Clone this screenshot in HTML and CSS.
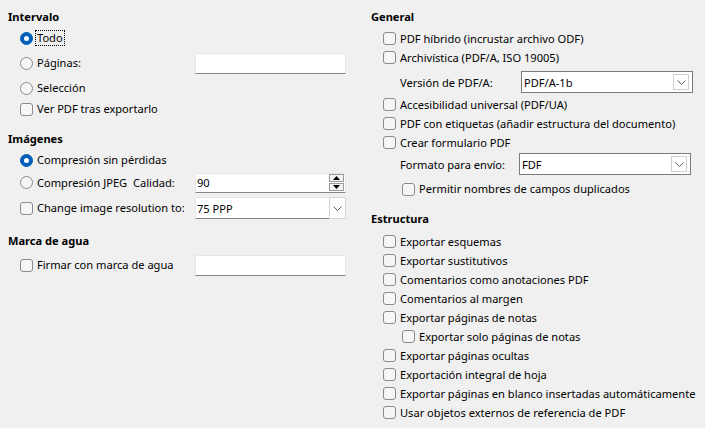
FILE: index.html
```html
<!DOCTYPE html>
<html lang="es">
<head>
<meta charset="utf-8">
<title>Exportar a PDF - General</title>
<link rel="stylesheet" href="styles.css">
</head>
<body>
<div class="dialog">
  <div class="col">
    <div class="heading">Intervalo</div>
    <div class="row h24"><div class="lead"><span class="radio on"></span><span class="label focus">Todo</span></div></div>
    <div class="row h26"><div class="lead"><span class="radio"></span><span class="label">Páginas:</span></div><span class="field"></span></div>
    <div class="row h24"><div class="lead"><span class="radio"></span><span class="label">Selección</span></div></div>
    <div class="row h18"><div class="lead"><span class="check"></span><span class="label">Ver PDF tras exportarlo</span></div></div>

    <div class="heading mt12">Imágenes</div>
    <div class="row h24"><div class="lead"><span class="radio on"></span><span class="label">Compresión sin pérdidas</span></div></div>
    <div class="row h21"><div class="lead"><span class="radio"></span><span class="label">Compresión JPEG&nbsp; Calidad:</span></div>
      <span class="field spin"><span class="val">90</span>
        <span class="spinbtns">
          <span class="sbtn"><svg width="7" height="4" viewBox="0 0 7 4"><path d="M0 4 L3.5 0 L7 4 Z" fill="#000"/></svg></span>
          <span class="sbtn"><svg width="7" height="4" viewBox="0 0 7 4"><path d="M0 0 L3.5 4 L7 0 Z" fill="#000"/></svg></span>
        </span>
      </span>
    </div>
    <div class="row h30"><div class="lead"><span class="check"></span><span class="label">Change image resolution to:</span></div>
      <span class="field combo"><span class="val">75 PPP</span>
        <span class="dropbtn"><svg width="9" height="5" viewBox="0 0 9 5"><path d="M0.5 0.5 L4.5 4.5 L8.5 0.5" fill="none" stroke="#606060" stroke-width="1"/></svg></span>
      </span>
    </div>

    <div class="heading mt9">Marca de agua</div>
    <div class="row h30"><div class="lead"><span class="check"></span><span class="label">Firmar con marca de agua</span></div><span class="field"></span></div>
  </div>

  <div class="col">
    <div class="heading">General</div>
    <div class="row h19 mt3"><span class="check"></span><span class="label">PDF híbrido (incrustar archivo ODF)</span></div>
    <div class="row h19"><span class="check"></span><span class="label">Archivística (PDF/A, ISO 19005)</span></div>
    <div class="row h28 sub pt2">
      <span class="sublabel w121">Versión de PDF/A:</span>
      <span class="select"><span class="val">PDF/A-1b</span>
        <span class="selbtn"><svg width="9" height="5" viewBox="0 0 9 5"><path d="M0.5 0.5 L4.5 4.5 L8.5 0.5" fill="none" stroke="#606060" stroke-width="1"/></svg></span>
      </span>
    </div>
    <div class="row h19"><span class="check"></span><span class="label">Accesibilidad universal (PDF/UA)</span></div>
    <div class="row h19"><span class="check"></span><span class="label">PDF con etiquetas (añadir estructura del documento)</span></div>
    <div class="row h19"><span class="check"></span><span class="label">Crear formulario PDF</span></div>
    <div class="row h24 sub">
      <span class="sublabel w119">Formato para envío:</span>
      <span class="select"><span class="val">FDF</span>
        <span class="selbtn"><svg width="9" height="5" viewBox="0 0 9 5"><path d="M0.5 0.5 L4.5 4.5 L8.5 0.5" fill="none" stroke="#606060" stroke-width="1"/></svg></span>
      </span>
    </div>
    <div class="row h26 nested"><span class="check"></span><span class="label">Permitir nombres de campos duplicados</span></div>

    <div class="heading mt8">Estructura</div>
    <div class="row h19 mt4"><span class="check"></span><span class="label">Exportar esquemas</span></div>
    <div class="row h19"><span class="check"></span><span class="label">Exportar sustitutivos</span></div>
    <div class="row h19"><span class="check"></span><span class="label">Comentarios como anotaciones PDF</span></div>
    <div class="row h19"><span class="check"></span><span class="label">Comentarios al margen</span></div>
    <div class="row h19"><span class="check"></span><span class="label">Exportar páginas de notas</span></div>
    <div class="row h19 nested"><span class="check"></span><span class="label">Exportar solo páginas de notas</span></div>
    <div class="row h19"><span class="check"></span><span class="label">Exportar páginas ocultas</span></div>
    <div class="row h19"><span class="check"></span><span class="label">Exportación integral de hoja</span></div>
    <div class="row h19"><span class="check"></span><span class="label">Exportar páginas en blanco insertadas automáticamente</span></div>
    <div class="row h19"><span class="check"></span><span class="label">Usar objetos externos de referencia de PDF</span></div>
  </div>
</div>
</body>
</html>
```

FILE: styles.css
```css
html, body {
  margin: 0;
  padding: 0;
  background: #f0f0f0;
}
body {
  font-family: "Noto Sans", "Open Sans", sans-serif;
  font-size: 11.1px;
  color: #000;
  width: 705px;
  height: 428px;
  overflow: hidden;
}
.dialog {
  display: flex;
}
.col {
  width: 355px;
  padding: 8px 0 0 8px;
  display: flex;
  flex-direction: column;
}
.col + .col {
  width: 334px;
}
.heading {
  height: 18px;
  line-height: 18px;
  font-weight: bold;
}
.mt3 { margin-top: 3px; }
.mt4 { margin-top: 4px; }
.mt8 { margin-top: 8px; }
.mt9 { margin-top: 9px; }
.mt12 { margin-top: 12px; }

.row {
  display: flex;
  align-items: center;
  padding-left: 12px;
  box-sizing: border-box;
}
.h18 { height: 18px; }
.h19 { height: 19px; }
.h21 { height: 21px; }
.h24 { height: 24px; }
.h26 { height: 26px; }
.h28 { height: 28px; }
.h30 { height: 30px; }
.pt2 { padding-top: 2px; }

.row.sub { padding-left: 29px; }
.row.nested { padding-left: 31px; }

.lead {
  width: 175px;
  display: flex;
  align-items: center;
}
.label {
  margin-left: 4px;
  white-space: nowrap;
  line-height: 14px;
}
.label.focus {
  border: 1px dotted #000;
  margin-left: 2px;
  padding: 0 1px;
}

.radio {
  width: 13px;
  height: 13px;
  box-sizing: border-box;
  border: 1px solid #8a8a8a;
  border-radius: 50%;
  background: #f6f6f6;
  flex: none;
  display: flex;
  align-items: center;
  justify-content: center;
}
.radio.on {
  background: #005fb8;
  border-color: #005fb8;
}
.radio.on::after {
  content: "";
  width: 5px;
  height: 5px;
  border-radius: 50%;
  background: #fff;
}
.check {
  width: 13px;
  height: 13px;
  box-sizing: border-box;
  border: 1px solid #8a8a8a;
  border-radius: 3px;
  background: #f6f6f6;
  flex: none;
}

.field {
  width: 151px;
  height: 21px;
  box-sizing: border-box;
  background: #fff;
  border: 1px solid #e6e6e6;
  border-bottom-color: #868686;
  display: flex;
  align-items: center;
  padding-left: 1px;
}
.field.spin { height: 20px; padding-right: 1px; }
.field.combo { height: 22px; padding-right: 0; border-right-color: #e6e6e6; }
.val {
  flex: 1;
  white-space: nowrap;
}
.spinbtns {
  display: flex;
  flex-direction: column;
  gap: 1px;
}
.sbtn {
  width: 15px;
  height: 8px;
  box-sizing: border-box;
  border: 1px solid #9a9a9a;
  background: #f3f3f3;
  display: flex;
  align-items: center;
  justify-content: center;
}
.dropbtn {
  width: 17px;
  align-self: stretch;
  box-sizing: border-box;
  border: 1px solid #d4d4d4;
  margin: -1px -1px -1px 0;
  background: #fff;
  display: flex;
  align-items: center;
  justify-content: center;
}

.sublabel { white-space: nowrap; }
.w121 { width: 121px; }
.w119 { width: 119px; }

.select {
  width: 172px;
  height: 22px;
  box-sizing: border-box;
  background: #fff;
  border: 1px solid #7a7a7a;
  display: flex;
  align-items: center;
  padding: 2px 3px 2px 2px;
}
.selbtn {
  width: 16px;
  align-self: stretch;
  box-sizing: border-box;
  border: 1px solid #cfcfcf;
  display: flex;
  align-items: center;
  justify-content: center;
}
```
